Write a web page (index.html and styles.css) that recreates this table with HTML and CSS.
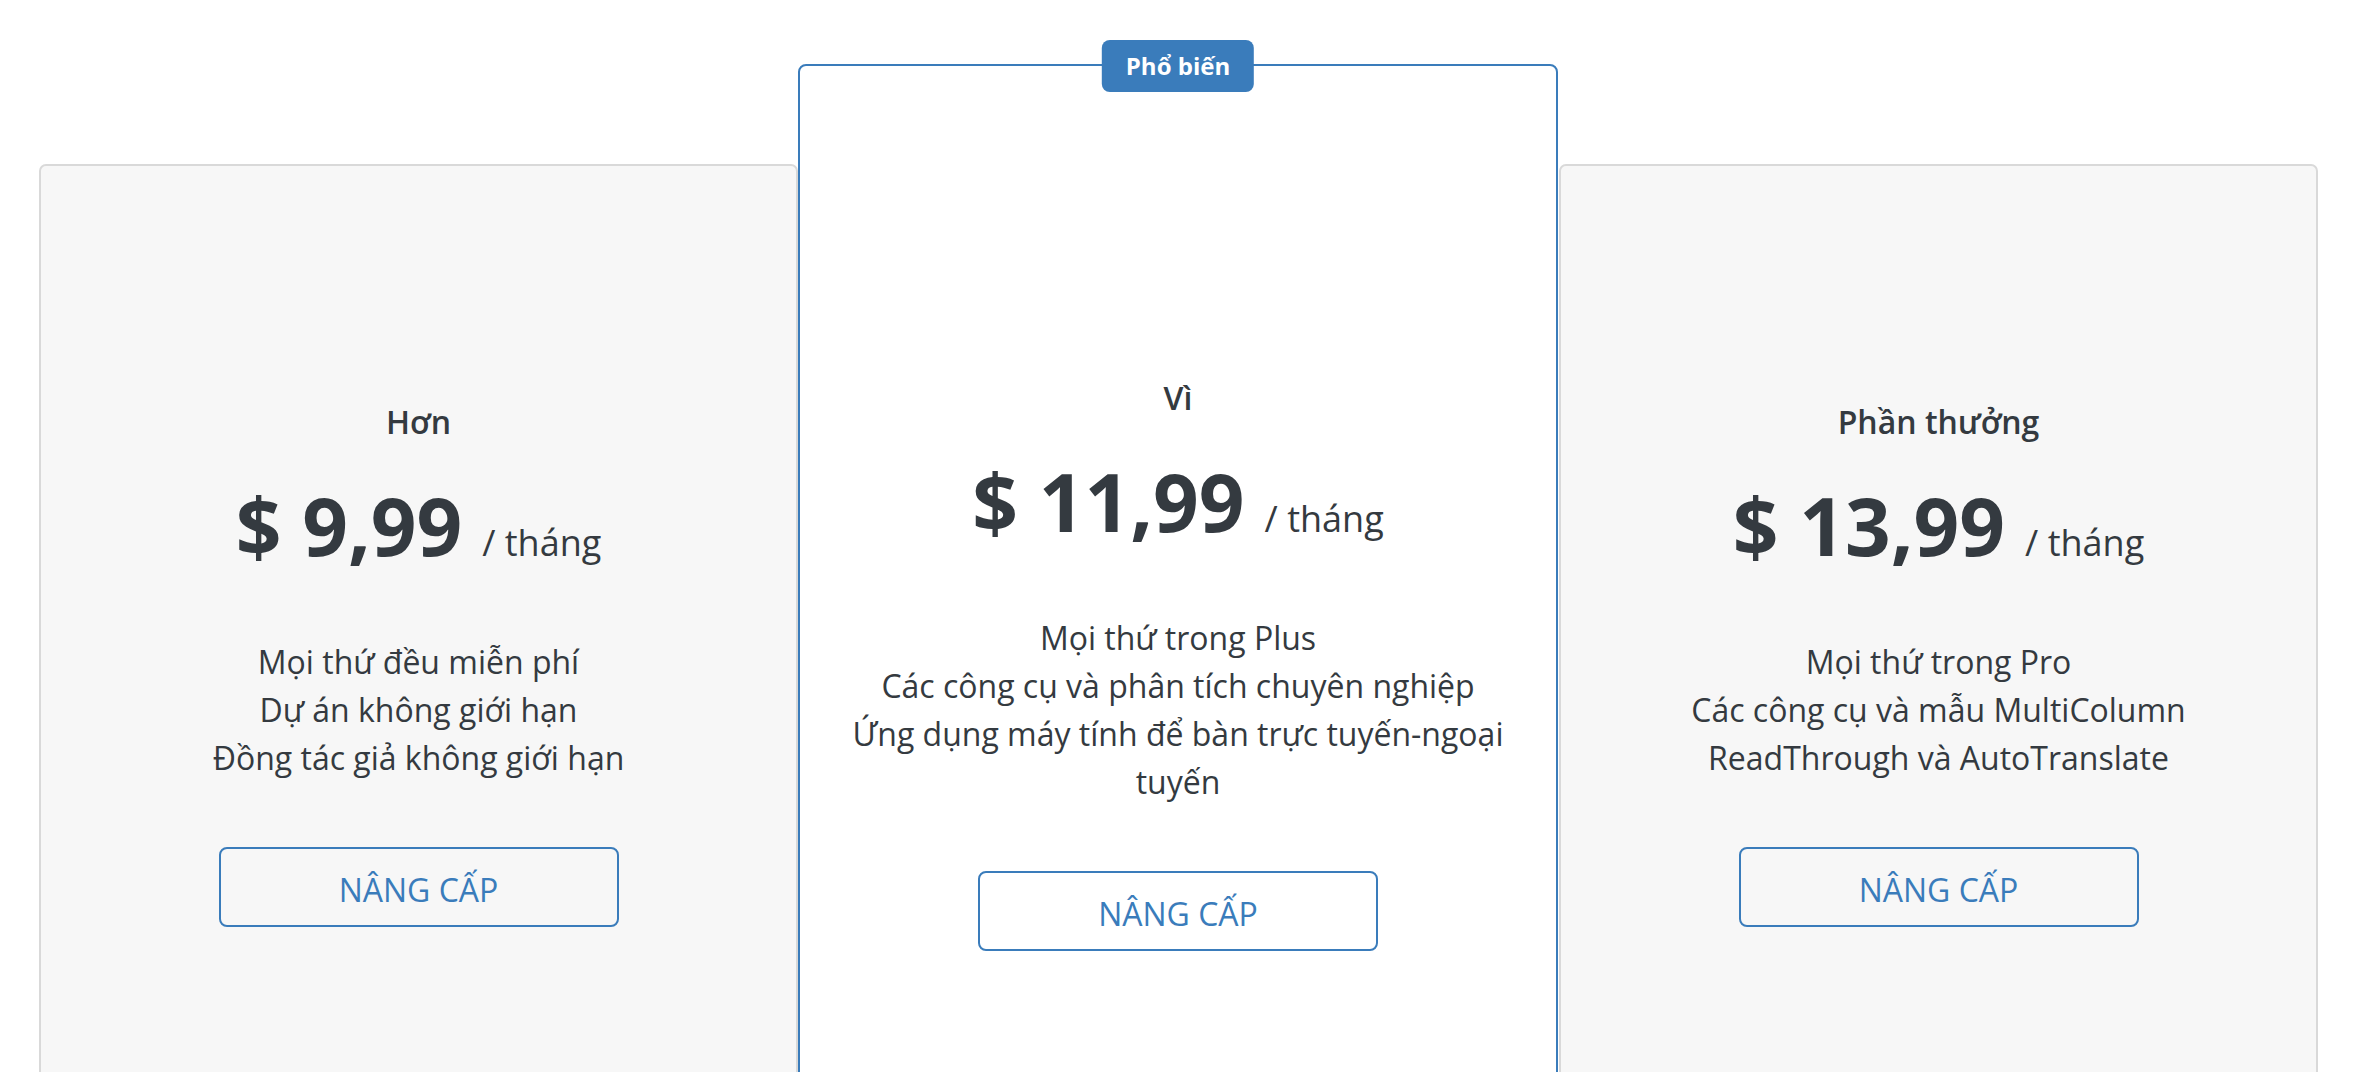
FILE: index.html
```html
<!DOCTYPE html>
<html lang="vi">
<head>
<meta charset="utf-8">
<title>Bảng giá</title>
<link rel="stylesheet" href="styles.css">
</head>
<body>
<main class="pricing">
  <section class="plan">
    <h2 class="plan-title">Hơn</h2>
    <div class="plan-price"><span class="amount">$ 9,99</span><span class="period">/ tháng</span></div>
    <ul class="plan-features">
      <li>Mọi thứ đều miễn phí</li>
      <li>Dự án không giới hạn</li>
      <li>Đồng tác giả không giới hạn</li>
    </ul>
    <button class="plan-btn">NÂNG CẤP</button>
  </section>
  <section class="plan plan-featured">
    <span class="badge">Phổ biến</span>
    <h2 class="plan-title">Vì</h2>
    <div class="plan-price"><span class="amount">$ 11,99</span><span class="period">/ tháng</span></div>
    <ul class="plan-features">
      <li>Mọi thứ trong Plus</li>
      <li>Các công cụ và phân tích chuyên nghiệp</li>
      <li>Ứng dụng máy tính để bàn trực tuyến-ngoại tuyến</li>
    </ul>
    <button class="plan-btn">NÂNG CẤP</button>
  </section>
  <section class="plan plan-last">
    <h2 class="plan-title">Phần thưởng</h2>
    <div class="plan-price"><span class="amount">$ 13,99</span><span class="period">/ tháng</span></div>
    <ul class="plan-features">
      <li>Mọi thứ trong Pro</li>
      <li>Các công cụ và mẫu MultiColumn</li>
      <li>ReadThrough và AutoTranslate</li>
    </ul>
    <button class="plan-btn">NÂNG CẤP</button>
  </section>
</main>
</body>
</html>
```

FILE: styles.css
```css
* { box-sizing: border-box; }

html, body {
  margin: 0;
  padding: 0;
  background: #ffffff;
  overflow: hidden;
}

body {
  font-family: "Open Sans", "Noto Sans", sans-serif;
  color: #343a40;
}

.pricing {
  display: flex;
  align-items: center;
  padding: 64px 0 0 39px;
}

.plan {
  position: relative;
  width: 759px;
  height: 997px;
  flex: none;
  background: #f7f7f7;
  border: 2px solid #d9d9d9;
  border-radius: 7px;
  padding: 0 48px;
  display: flex;
  flex-direction: column;
  align-items: center;
  justify-content: center;
  text-align: center;
}

.plan-featured {
  width: 760px;
  height: 1197px;
  background: #ffffff;
  border-color: #3a7cbb;
  border-radius: 8px;
  z-index: 1;
}

.plan-last {
  margin-left: 1px;
}

.badge {
  position: absolute;
  top: -26px;
  left: 50%;
  transform: translateX(-50%);
  height: 52px;
  padding: 0 24px;
  line-height: 52px;
  background: #3a7cbb;
  color: #ffffff;
  font-size: 24px;
  font-weight: 700;
  border-radius: 8px;
  white-space: nowrap;
}

.plan-title {
  margin: 0;
  font-size: 32px;
  font-weight: 600;
  line-height: 48px;
}

.plan-price {
  margin-top: 31px;
  display: flex;
  align-items: baseline;
  justify-content: center;
  line-height: 96px;
  height: 98px;
}

.amount {
  font-size: 80px;
  font-weight: 700;
}

.period {
  font-size: 36px;
  font-weight: 400;
  margin-left: 20px;
}

.plan-features {
  list-style: none;
  margin: 63px 0 0;
  padding: 0;
  font-size: 32px;
  line-height: 48px;
}

.plan-btn {
  margin-top: 65px;
  width: 400px;
  height: 80px;
  padding: 5px 0 0;
  background: transparent;
  border: 2px solid #3a7cbb;
  border-radius: 8px;
  color: #3a7cbb;
  font-family: "Open Sans", "Noto Sans", sans-serif;
  font-size: 32px;
  font-weight: 400;
  line-height: 48px;
  cursor: pointer;
}
```
